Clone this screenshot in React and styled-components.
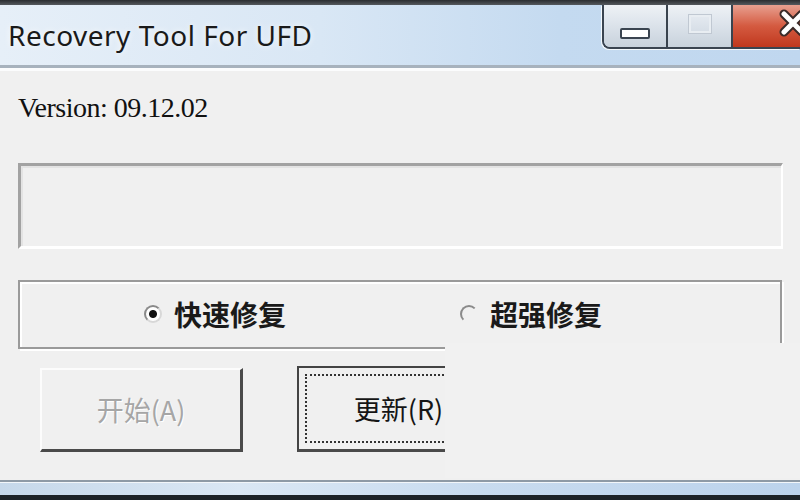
import React from "react";
import styled, { createGlobalStyle } from "styled-components";

const Global = createGlobalStyle`
  html, body { margin: 0; padding: 0; background: #f0f0f0; overflow: hidden; }
  #root { width: 800px; height: 500px; }
`;

const Window = styled.div`
  position: relative;
  width: 800px;
  height: 500px;
  display: flex;
  flex-direction: column;
  background: #f0f0f0;
  overflow: hidden;
`;

const TopEdge = styled.div`
  height: 5px;
  background: linear-gradient(#2a2d30, #55595e);
  flex: none;
`;

const TitleBar = styled.div`
  height: 60px;
  flex: none;
  display: flex;
  align-items: flex-start;
  justify-content: space-between;
  background: linear-gradient(90deg, #e6eff8 0%, #d9e7f5 40%, #c4daf0 70%, #c0d7ef 100%);
  border-bottom: 3px solid #a7b2bd;
  box-shadow: 0 3px 0 #fbfcfd;
`;

const Title = styled.div`
  font-family: "Noto Sans", "Open Sans", sans-serif;
  font-size: 28px;
  color: #1a1a1a;
  padding: 11px 0 0 8px;
  letter-spacing: 0.5px;
  text-shadow: 0 0 6px rgba(255,255,255,0.9);
`;

const Caption = styled.div`
  display: flex;
  height: 42px;
  border: 2px solid #3a4450;
  border-top: none;
  border-right: none;
  border-bottom-left-radius: 8px;
  overflow: hidden;
  box-shadow: -1px 1px 0 rgba(255,255,255,0.8);
`;

const CapBtn = styled.div`
  width: ${p => p.w}px;
  height: 100%;
  display: flex;
  align-items: center;
  justify-content: ${p => p.close ? "flex-end" : "center"};
  border-left: ${p => p.first ? "none" : "2px solid #39434e"};
  background: ${p => p.close
    ? "linear-gradient(#e8a090, #d45a40 50%, #c0381e 100%)"
    : "linear-gradient(#eef2f6, #dbe2ea 50%, #c8d2dc 100%)"};
`;

const MinGlyph = styled.div`
  width: 26px;
  height: 7px;
  background: #fff;
  border: 2px solid #3a4450;
  border-radius: 2px;
  margin-top: 14px;
`;

const MaxGlyph = styled.div`
  width: 18px;
  height: 14px;
  border: 2px solid #e8edf2;
  outline: 1px solid #c0c8d2;
  margin-top: -4px;
`;

const CloseGlyph = styled.svg`
  width: 30px;
  height: 30px;
  margin-right: -8px;
  margin-top: -6px;
`;

const Client = styled.div`
  flex: 1;
  display: flex;
  flex-direction: column;
  padding: 3px 17px 0 18px;
  border-bottom: 2px solid #8e9aa6;
`;

const Version = styled.div`
  font-family: "Liberation Serif", serif;
  font-size: 28px;
  color: #111;
  margin-top: 21px;
  line-height: 32px;
  letter-spacing: -0.5px;
`;

const SunkenBox = styled.div`
  margin-top: 39px;
  height: 80px;
  border-top: 3px solid #a2a2a2;
  border-left: 3px solid #a2a2a2;
  border-right: 2px solid #ffffff;
  border-bottom: 3px solid #ffffff;
  box-shadow: inset 2px 2px 0 #e3e3e3;
`;

const Group = styled.div`
  margin-top: 31px;
  height: 65px;
  width: 760px;
  border: 2px solid #9a9a9a;
  box-shadow: inset 2px 2px 0 #ffffff, 2px 2px 0 #ffffff;
  display: flex;
  align-items: center;
`;

const RadioItem = styled.label`
  display: flex;
  align-items: center;
  gap: 12px;
  margin-left: ${p => p.offset}px;
  font-family: "Noto Sans CJK SC", "Noto Sans", sans-serif;
  font-size: 28px;
  font-weight: 700;
  color: #1a1a1a;
  margin-top: -1px;
`;

const RadioDot = styled.span`
  width: 18px;
  height: 18px;
  border-radius: 50%;
  box-sizing: border-box;
  border: 2px solid #8a8a8a;
  border-right-color: ${p => p.checked ? "#d8d8d8" : "transparent"};
  border-bottom-color: ${p => p.checked ? "#d8d8d8" : "transparent"};
  background: ${p => p.checked ? "radial-gradient(circle, #111 0 3.5px, #fff 4.5px)" : "transparent"};
  display: inline-block;
`;

const ButtonRow = styled.div`
  display: flex;
  gap: 54px;
  margin-top: 19px;
  margin-left: 22px;
`;

const Button = styled.div`
  width: ${p => p.w}px;
  box-sizing: border-box;
  display: flex;
  align-items: center;
  justify-content: center;
  font-family: "Noto Sans CJK SC", "Noto Sans", sans-serif;
  font-size: 27px;
  color: ${p => p.disabled ? "#a6a6a6" : "#151515"};
  text-shadow: ${p => p.disabled ? "1px 1px 0 #fff" : "none"};
  border-top: 2px solid ${p => p.focused ? "#444" : "#fcfcfc"};
  border-left: 2px solid ${p => p.focused ? "#444" : "#fcfcfc"};
  border-right: 3px solid #4a4a4a;
  border-bottom: 3px solid #4a4a4a;
  padding: 6px;
  margin-top: ${p => p.focused ? -2 : 0}px;
  height: ${p => p.focused ? 86 : 84}px;
`;

const FocusRect = styled.div`
  flex: 1;
  align-self: stretch;
  display: flex;
  align-items: center;
  justify-content: center;
  border: 2px dotted #333;
  padding-left: 4px;
`;

const Patch = styled.div`
  position: absolute;
  left: 445px;
  top: 343px;
  width: 355px;
  height: 135px;
  background: #f1f1f1;
`;

const BottomFrame = styled.div`
  height: 12px;
  flex: none;
  background: linear-gradient(90deg, #c6d8ea, #dae7f4 30%, #c8dbef 60%, #bcd3ec);
  border-top: 1px solid #f2f6fa;
  border-bottom: 5px solid #1d2328;
`;

export default function App() {
  return (
    <>
      <Global />
      <Window>
        <TopEdge />
        <TitleBar>
          <Title>Recovery Tool For UFD</Title>
          <Caption>
            <CapBtn w={62} first><MinGlyph /></CapBtn>
            <CapBtn w={63}><MaxGlyph /></CapBtn>
            <CapBtn w={67} close>
              <CloseGlyph viewBox="0 0 30 30">
                <path d="M6 6 L24 24 M24 6 L6 24" stroke="#3a2a28" strokeWidth="9" strokeLinecap="round" />
                <path d="M6 6 L24 24 M24 6 L6 24" stroke="#ffffff" strokeWidth="5" strokeLinecap="round" />
              </CloseGlyph>
            </CapBtn>
          </Caption>
        </TitleBar>
        <Client>
          <Version>Version: 09.12.02</Version>
          <SunkenBox />
          <Group>
            <RadioItem offset={124}><RadioDot checked />快速修复</RadioItem>
            <RadioItem offset={174}><RadioDot />超强修复</RadioItem>
          </Group>
          <ButtonRow>
            <Button w={203} disabled>开始(A)</Button>
            <Button w={200} focused><FocusRect>更新(R)</FocusRect></Button>
          </ButtonRow>
        </Client>
        <BottomFrame />
        <Patch />
      </Window>
    </>
  );
}
